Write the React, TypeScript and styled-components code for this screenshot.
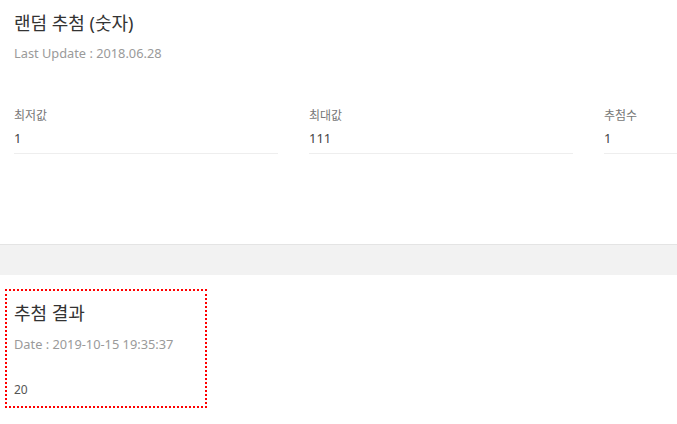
import * as React from 'react';
import styled, { createGlobalStyle } from 'styled-components';

const GlobalStyle = createGlobalStyle`
	html, body {
		margin: 0;
		padding: 0;
		background: #fff;
		font-family: "Noto Sans", "Noto Sans CJK KR", sans-serif;
		overflow: hidden;
	}
`;

const Page = styled.div`
	display: flex;
	flex-direction: column;
	width: 677px;
	overflow: hidden;
`;

const Panel = styled.section`
	height: 245px;
	padding: 11px 14px 0;
	box-sizing: border-box;
	border-bottom: 1px solid #e4e4e4;
	overflow: hidden;
`;

const Title = styled.h1`
	margin: 0;
	font-size: 18px;
	font-weight: 400;
	line-height: 24px;
	color: #333;
`;

const Sub = styled.div`
	margin-top: 10px;
	font-size: 12.8px;
	line-height: 16px;
	color: #9a9a9a;
`;

const Fields = styled.div`
	display: grid;
	grid-template-columns: 264px 264px 264px;
	column-gap: 31px;
	margin-top: 47px;
`;

const Field = styled.div`
	display: flex;
	flex-direction: column;
	border-bottom: 1px solid #eeeeee;
	padding-bottom: 6px;
`;

const Label = styled.label`
	font-size: 12px;
	line-height: 16px;
	color: #777;
`;

const Value = styled.div`
	margin-top: 5px;
	font-size: 13px;
	line-height: 18px;
	color: #444;
`;

const Band = styled.div`
	height: 30px;
	background: #f2f2f2;
`;

const Result = styled.section`
	padding: 14px 5px;
`;

const ResultBox = styled.div`
	width: 202px;
	height: 119px;
	box-sizing: border-box;
	border: 2px dotted #ff0000;
	padding: 10px 7px 0;
	display: flex;
	flex-direction: column;
`;

const ResultTitle = styled.h2`
	margin: 0;
	font-size: 18px;
	font-weight: 400;
	line-height: 24px;
	color: #333;
`;

const ResultDate = styled.div`
	margin-top: 11px;
	font-size: 12.8px;
	line-height: 16px;
	color: #9a9a9a;
`;

const ResultNum = styled.div`
	margin-top: 30px;
	font-size: 12px;
	line-height: 16px;
	color: #555;
`;

const fields = [
	{ label: '최저값', value: '1' },
	{ label: '최대값', value: '111' },
	{ label: '추첨수', value: '1' },
];

export default function App() {
	return (
		<Page>
			<GlobalStyle />
			<Panel>
				<Title>랜덤 추첨 (숫자)</Title>
				<Sub>Last Update : 2018.06.28</Sub>
				<Fields>
					{fields.map(f => (
						<Field key={f.label}>
							<Label>{f.label}</Label>
							<Value>{f.value}</Value>
						</Field>
					))}
				</Fields>
			</Panel>
			<Band />
			<Result>
				<ResultBox>
					<ResultTitle>추첨 결과</ResultTitle>
					<ResultDate>Date : 2019-10-15 19:35:37</ResultDate>
					<ResultNum>20</ResultNum>
				</ResultBox>
			</Result>
		</Page>
	);
}
